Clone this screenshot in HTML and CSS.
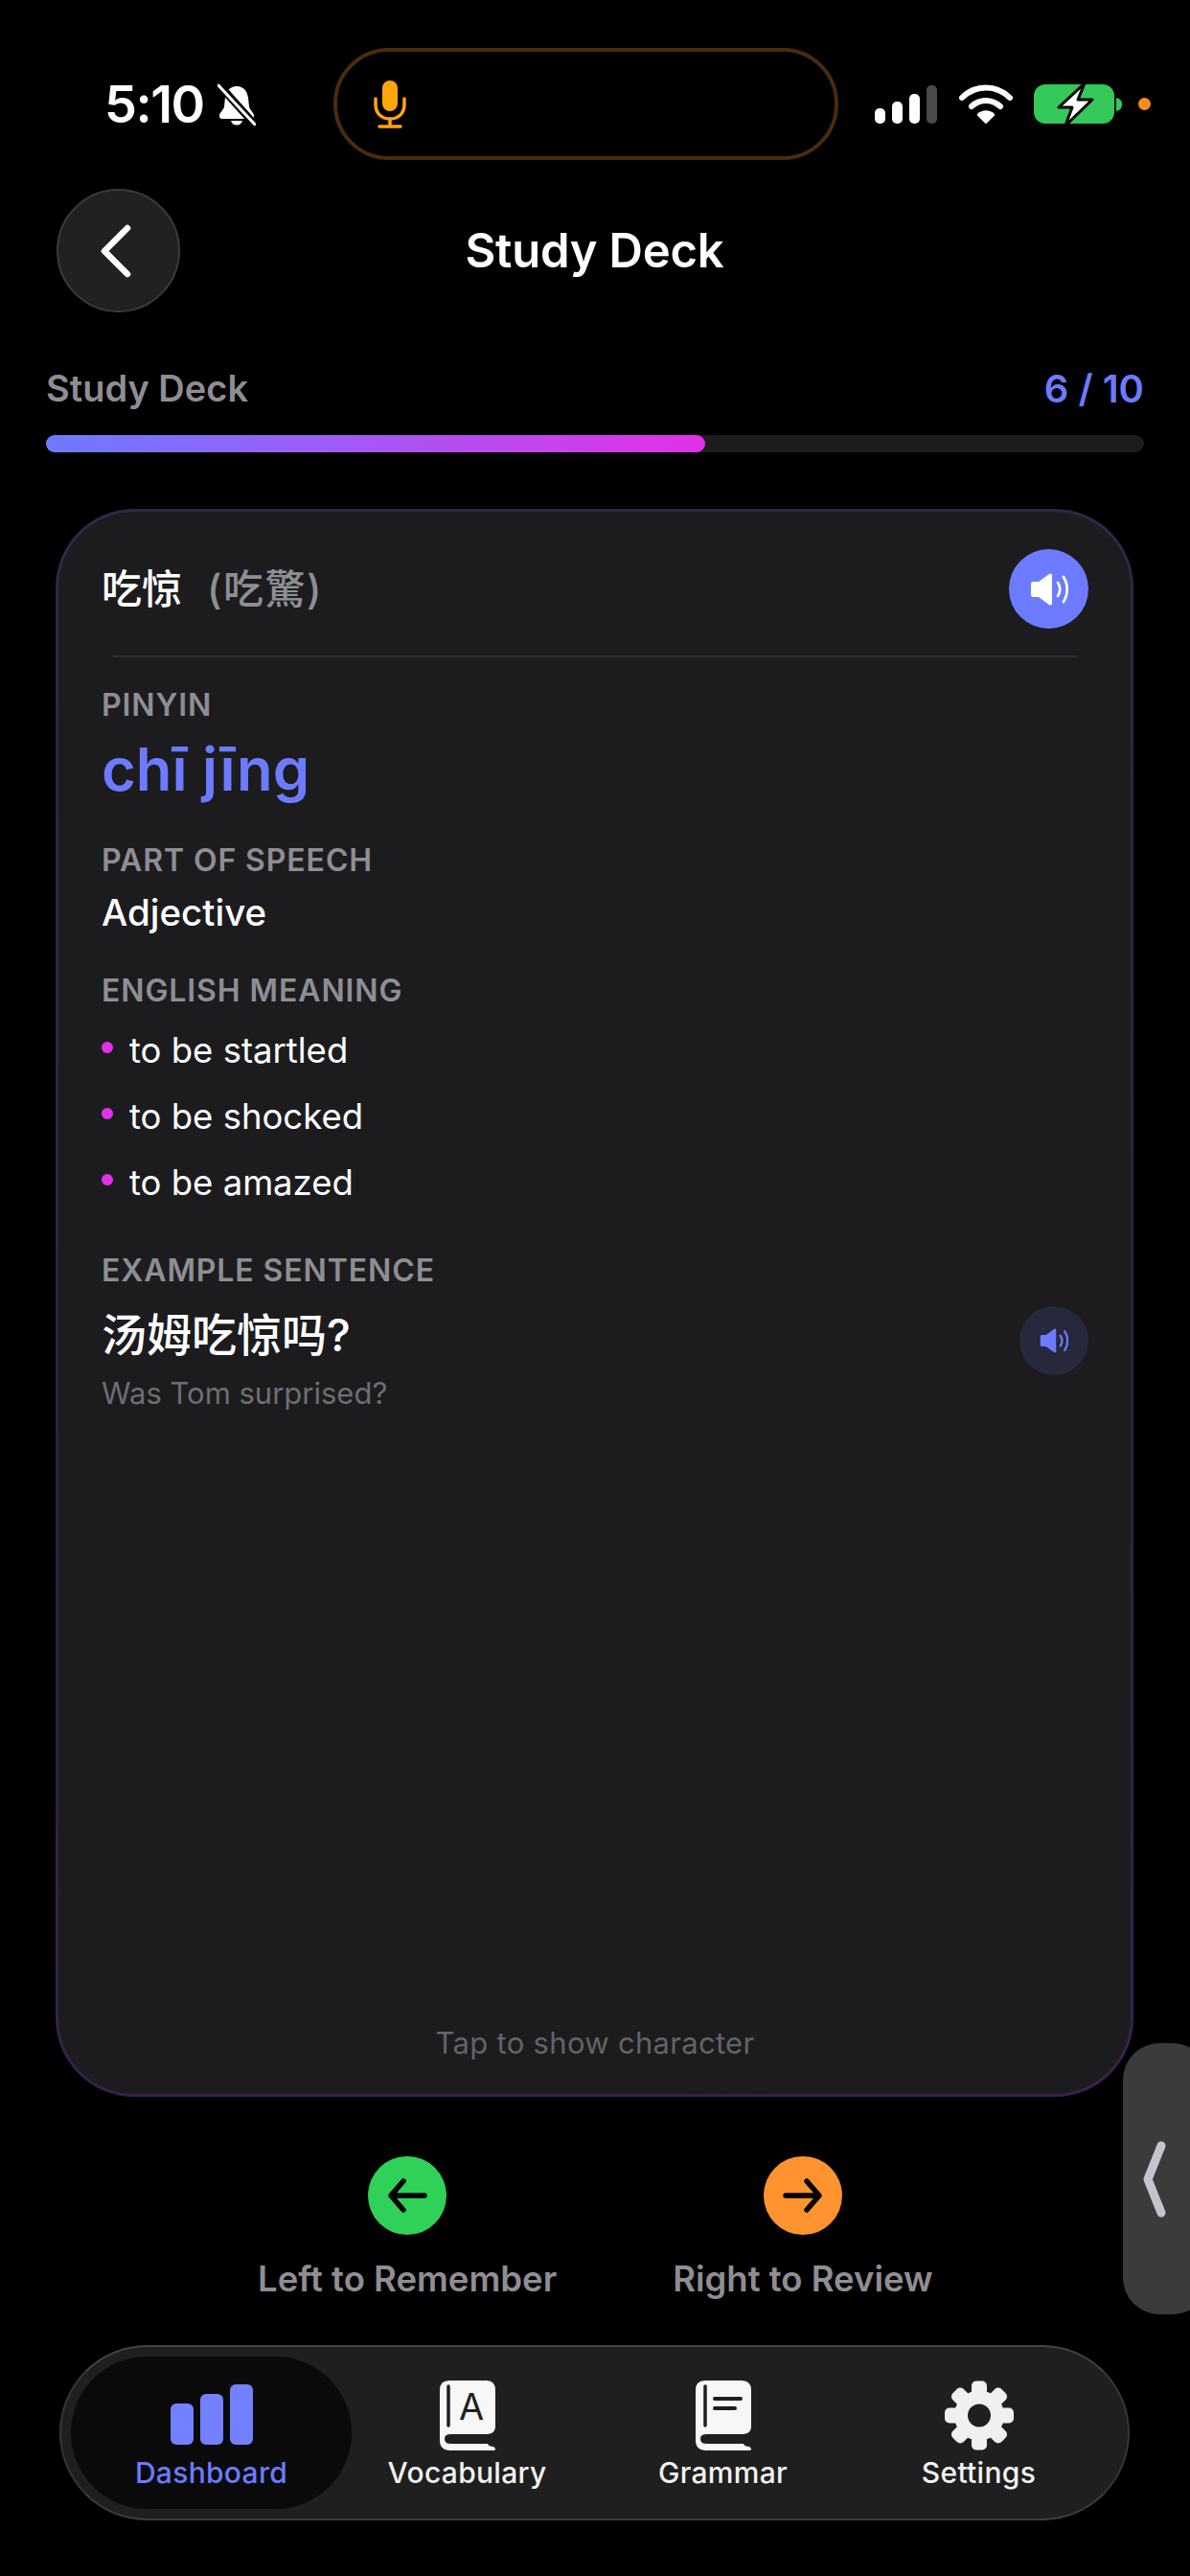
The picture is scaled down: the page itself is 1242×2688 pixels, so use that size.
FILE: index.html
```html
<!DOCTYPE html>
<html lang="en">
<head>
    <meta charset="UTF-8">
    <meta name="viewport" content="width=device-width, initial-scale=1.0">
    <title>Study Deck</title>
    <link rel="stylesheet" href="styles.css">
</head>
<body>
    <div class="page">
        <!-- status bar -->
        <div class="statusbar">
            <div class="status-left">
                <span class="clock">5:10</span>
                <svg class="bell" viewBox="0 0 40 44" width="40" height="44">
                    <path d="M20 3c7 0 11 5 12 12l1 9c.5 4 5 6 5 10 0 2-1 3-3 3H5c-2 0-3-1-3-3 0-4 4.500-6 5-10l1-9C9 8 13 3 20 3z" fill="#fff"/>
                    <path d="M14 39h12c-1 3-3 4.500-6 4.500s-5-1.500-6-4.500z" fill="#fff"/>
                    <path d="M3 3l35 39" stroke="#000" stroke-width="8"/>
                    <path d="M1 2l38 41" stroke="#fff" stroke-width="3" stroke-linecap="round"/>
                </svg>
            </div>
            <div class="island">
                <svg class="mic" viewBox="0 0 34 50" width="34" height="50">
                    <rect x="9" y="0" width="16" height="32" rx="8" fill="#ffa50a"/>
                    <path d="M2 19v6c0 9 6 15 15 15s15-6 15-15v-6" fill="none" stroke="#ffa50a" stroke-width="3.500" stroke-linecap="round"/>
                    <path d="M17 40v8M6 48h22" fill="none" stroke="#ffa50a" stroke-width="3.500" stroke-linecap="round"/>
                </svg>
            </div>
            <div class="status-right">
                <svg viewBox="0 0 65 40" width="65" height="40">
                    <rect x="0" y="24" width="11" height="16" rx="5" fill="#fff"/>
                    <rect x="18" y="17" width="11" height="23" rx="5" fill="#fff"/>
                    <rect x="36" y="9" width="11" height="31" rx="5" fill="#fff"/>
                    <rect x="54" y="0" width="11" height="40" rx="5" fill="#4a4a4a"/>
                </svg>
                <svg class="wifi" viewBox="0 0 56 41" width="56" height="41">
                    <path d="M3 14C17 0 39 0 53 14" fill="none" stroke="#fff" stroke-width="6" stroke-linecap="round"/>
                    <path d="M13 23c9-8 21-8 30 0" fill="none" stroke="#fff" stroke-width="6" stroke-linecap="round"/>
                    <path d="M19 31c5-5 13-5 18 0 .5.500.5 1 0 1.500L29 40.500c-.5.500-1.500.500-2 0l-8-8c-.5-.5-.5-1 0-1.500z" fill="#fff"/>
                </svg>
                <svg class="battery" viewBox="0 0 92 44" width="92" height="44">
                    <rect x="0" y="1" width="84" height="41" rx="12" fill="#34c759"/>
                    <path d="M86 15c4 1 6 3 6 7s-2 6-6 7z" fill="#34c759"/>
                    <path d="M53 0L26 25h14l-7 19 28-27H46z" fill="#fff" stroke="#000" stroke-width="3" stroke-linejoin="round"/>
                </svg>
                <span class="rec-dot"></span>
            </div>
        </div>

        <!-- header -->
        <header class="topbar">
            <button class="back-btn">
                <svg viewBox="0 0 36 56" width="36" height="56">
                    <path d="M31 4L7 28l24 24" fill="none" stroke="#fff" stroke-width="6.500" stroke-linecap="round" stroke-linejoin="round"/>
                </svg>
            </button>
            <h1>Study Deck</h1>
        </header>

        <!-- progress -->
        <section class="progress">
            <div class="progress-row">
                <span class="progress-name">Study Deck</span>
                <span class="progress-count">6 / 10</span>
            </div>
            <div class="progress-track">
                <div class="progress-fill" style="width: 60%"></div>
            </div>
        </section>

        <!-- flash card -->
        <main class="card">
            <div class="card-head">
                <div class="word">吃惊<span class="word-alt">(吃驚)</span></div>
                <button class="sound-btn">
                    <svg viewBox="0 0 40 34" width="40" height="34">
                        <path d="M1 11c0-1 1-2 2-2h6L20 1c1-1 3-.5 3 1v30c0 1.500-2 2-3 1L9 25H3c-1 0-2-1-2-2z" fill="#fff"/>
                        <path d="M29 10c3 4 3 10 0 14" fill="none" stroke="#fff" stroke-width="2.800" stroke-linecap="round"/>
                        <path d="M35 4c5 8 5 18 0 26" fill="none" stroke="#fff" stroke-width="2.800" stroke-linecap="round"/>
                    </svg>
                </button>
            </div>
            <div class="card-rule"></div>

            <div class="label label-pinyin">PINYIN</div>
            <div class="pinyin">chī jīng</div>

            <div class="label label-pos">PART OF SPEECH</div>
            <div class="pos">Adjective</div>

            <div class="label label-meaning">ENGLISH MEANING</div>
            <ul class="meanings">
                <li>to be startled</li>
                <li>to be shocked</li>
                <li>to be amazed</li>
            </ul>

            <div class="label label-example">EXAMPLE SENTENCE</div>
            <div class="example">
                <div>
                    <div class="example-zh">汤姆吃惊吗?</div>
                    <div class="example-en">Was Tom surprised?</div>
                </div>
                <button class="sound-btn small">
                    <svg viewBox="0 0 40 34" width="30" height="26">
                        <path d="M1 11c0-1 1-2 2-2h6L20 1c1-1 3-.5 3 1v30c0 1.500-2 2-3 1L9 25H3c-1 0-2-1-2-2z" fill="#6c7bff"/>
                        <path d="M29 10c3 4 3 10 0 14" fill="none" stroke="#6c7bff" stroke-width="3" stroke-linecap="round"/>
                        <path d="M35 4c5 8 5 18 0 26" fill="none" stroke="#6c7bff" stroke-width="3" stroke-linecap="round"/>
                    </svg>
                </button>
            </div>

            <div class="tap-hint">Tap to show character</div>
        </main>

        <!-- swipe hints -->
        <section class="swipes">
            <div class="swipe">
                <span class="swipe-circle green">
                    <svg viewBox="0 0 44 36" width="44" height="36">
                        <path d="M40 18H7M18 3L5 18l13 15" fill="none" stroke="#000" stroke-width="5.500" stroke-linecap="round" stroke-linejoin="round"/>
                    </svg>
                </span>
                <span class="swipe-label">Left to Remember</span>
            </div>
            <div class="swipe">
                <span class="swipe-circle orange">
                    <svg viewBox="0 0 44 36" width="44" height="36">
                        <path d="M4 18h33M26 3l13 15-13 15" fill="none" stroke="#000" stroke-width="5.500" stroke-linecap="round" stroke-linejoin="round"/>
                    </svg>
                </span>
                <span class="swipe-label">Right to Review</span>
            </div>
        </section>

        <!-- bottom tabs -->
        <nav class="tabbar">
            <div class="tab active">
                <span class="bars">
                    <i class="bar-a"></i><i class="bar-b"></i><i class="bar-c"></i>
                </span>
                <span class="tab-name">Dashboard</span>
            </div>
            <div class="tab">
                <svg viewBox="0 0 58 73" width="58" height="73">
                    <path d="M10 0H48Q58 0 58 10V48Q58 53 54 55L50 56H11Q5 56 5 61T11 66H50Q51 69 56 69Q58 70 58 71.500T56 73H11Q0 73 0 62V10Q0 0 10 0Z" fill="#f7f7f7"/>
                    <path d="M9 6V47" stroke="#1f1f1f" stroke-width="3.500" stroke-linecap="round"/>
                    <text class="book-letter" x="33" y="41" text-anchor="middle">A</text>
                </svg>
                <span class="tab-name">Vocabulary</span>
            </div>
            <div class="tab">
                <svg viewBox="0 0 58 73" width="58" height="73">
                    <path d="M10 0H48Q58 0 58 10V48Q58 53 54 55L50 56H11Q5 56 5 61T11 66H50Q51 69 56 69Q58 70 58 71.500T56 73H11Q0 73 0 62V10Q0 0 10 0Z" fill="#f7f7f7"/>
                    <path d="M10 6V47" stroke="#1f1f1f" stroke-width="3.500" stroke-linecap="round"/>
                    <path d="M20 19H47M20 29H41" stroke="#1f1f1f" stroke-width="4" stroke-linecap="round"/>
                </svg>
                <span class="tab-name">Grammar</span>
            </div>
            <div class="tab">
                <svg viewBox="-36 -36 72 72" width="72" height="72">
                    <g fill="#f0f0f0">
                        <circle r="26"/>
                        <rect x="-8" y="-36" width="16" height="20" rx="5"/>
                        <rect x="-8" y="-36" width="16" height="20" rx="5" transform="rotate(45)"/>
                        <rect x="-8" y="-36" width="16" height="20" rx="5" transform="rotate(90)"/>
                        <rect x="-8" y="-36" width="16" height="20" rx="5" transform="rotate(135)"/>
                        <rect x="-8" y="-36" width="16" height="20" rx="5" transform="rotate(180)"/>
                        <rect x="-8" y="-36" width="16" height="20" rx="5" transform="rotate(225)"/>
                        <rect x="-8" y="-36" width="16" height="20" rx="5" transform="rotate(270)"/>
                        <rect x="-8" y="-36" width="16" height="20" rx="5" transform="rotate(315)"/>
                    </g>
                    <circle r="12" fill="#1f1f1f"/>
                </svg>
                <span class="tab-name">Settings</span>
            </div>
        </nav>

        <!-- edge drawer handle -->
        <div class="edge-handle">
            <svg viewBox="0 0 26 80" width="26" height="80">
                <path d="M20 5L6 40l14 35" fill="none" stroke="#c4c5cc" stroke-width="9" stroke-linecap="round" stroke-linejoin="round"/>
            </svg>
        </div>
    </div>
</body>
</html>
```

FILE: styles.css
```css
/* base */
* {
    box-sizing: border-box;
}

html, body {
    margin: 0;
    padding: 0;
    background-color: #000000;
}

body {
    font-family: Inter, "Noto Sans CJK SC", sans-serif;
    color: #ffffff;
}

.page {
    position: relative;
    width: 1242px;
    height: 2688px;
    overflow: hidden;
}

button {
    padding: 0;
    border: 0;
    cursor: pointer;
}

/* status bar */
.statusbar {
    display: flex;
    align-items: flex-start;
    height: 167px;
    padding-top: 50px;
}

.status-left {
    display: flex;
    align-items: center;
    gap: 14px;
    width: 348px;
    height: 117px;
    padding-left: 109px;
}

.clock {
    font-size: 54px;
    font-weight: 600;
    letter-spacing: -1.5px;
}

.island {
    display: flex;
    align-items: center;
    width: 527px;
    height: 117px;
    padding-left: 38px;
    border: 4px solid #4a2b0c;
    border-radius: 58px;
}

.status-right {
    display: flex;
    align-items: center;
    height: 117px;
    padding-left: 38px;
}

.wifi {
    margin-left: 23px;
}

.battery {
    margin-left: 22px;
}

.rec-dot {
    width: 13px;
    height: 13px;
    margin-left: 17px;
    border-radius: 50%;
    background-color: #ff8a1e;
}

/* header */
.topbar {
    display: grid;
    grid-template-columns: 1fr auto 1fr;
    align-items: center;
    height: 129px;
    margin-top: 30px;
    padding: 0 60px 0 59px;
}

.back-btn {
    display: flex;
    align-items: center;
    justify-content: center;
    width: 129px;
    height: 129px;
    padding-right: 8px;
    border: 2px solid #3b3b3b;
    border-radius: 50%;
    background-color: #212121;
}

.topbar h1 {
    margin: 0;
    font-size: 49px;
    font-weight: 600;
    letter-spacing: -0.2px;
}

/* progress */
.progress {
    margin-top: 55px;
    padding: 0 48px;
}

.progress-row {
    display: flex;
    justify-content: space-between;
    align-items: center;
    height: 48px;
    font-size: 38px;
    font-weight: 600;
}

.progress-name {
    color: #8e8e93;
}

.progress-count {
    font-size: 40px;
    color: #6c7bff;
}

.progress-track {
    height: 18px;
    margin-top: 25px;
    border-radius: 9px;
    background-color: #1c1c1e;
}

.progress-fill {
    height: 100%;
    border-radius: 9px;
    background: linear-gradient(90deg, #6c7bff, #e132e8);
}

/* card */
.card {
    display: flex;
    flex-direction: column;
    width: 1125px;
    height: 1657px;
    margin: 59px 0 0 58px;
    padding: 39px 44px 0 45px;
    border: 3px solid transparent;
    border-radius: 82px;
    background:
        linear-gradient(#1c1c1e, #1c1c1e) padding-box,
        linear-gradient(170deg, #2b2a48, #2a2440 60%, #3a2050) border-box;
}

.card-head {
    display: flex;
    align-items: center;
    justify-content: space-between;
    height: 83px;
}

.word {
    font-size: 42px;
    font-weight: 500;
    line-height: 60px;
}

.word-alt {
    margin-left: 26px;
    color: #8e8e93;
    font-weight: 500;
    letter-spacing: 1.5px;
}

.sound-btn {
    display: flex;
    align-items: center;
    justify-content: center;
    width: 83px;
    height: 83px;
    border-radius: 50%;
    background-color: #6c7bff;
}

.sound-btn.small {
    width: 72px;
    height: 72px;
    background-color: #28283c;
}

.card-rule {
    height: 2px;
    margin: 28px 11px 0 12px;
    background-color: #2e2e30;
}

.label {
    height: 40px;
    line-height: 40px;
    font-size: 32px;
    font-weight: 600;
    letter-spacing: 0.9px;
    color: #8e8e93;
}

.label-pinyin {
    margin-top: 30px;
}

.pinyin {
    height: 84px;
    margin-top: 5px;
    line-height: 84px;
    font-size: 61.5px;
    font-weight: 600;
    color: #6c7bff;
}

.label-pos {
    margin-top: 33px;
}

.pos {
    height: 56px;
    margin-top: 6px;
    line-height: 56px;
    font-size: 38.5px;
    font-weight: 500;
}

.label-meaning {
    margin-top: 34px;
}

.meanings {
    margin: 17px 0 0;
    padding: 0;
    list-style: none;
}

.meanings li {
    position: relative;
    height: 69px;
    padding-left: 29px;
    line-height: 50px;
    font-size: 36.5px;
    font-weight: 400;
}

/* bullet dot */
.meanings li::before {
    content: "";
    position: absolute;
    left: 0;
    top: 16px;
    width: 12px;
    height: 12px;
    border-radius: 50%;
    background-color: #e132e8;
}

.label-example {
    margin-top: 28px;
}

.example {
    display: flex;
    align-items: flex-start;
    justify-content: space-between;
    margin-top: 12px;
}

.example .small {
    margin-top: 5px;
}

.example-zh {
    height: 70px;
    line-height: 70px;
    font-size: 47px;
    font-weight: 500;
}

.example-en {
    height: 44px;
    margin-top: 4px;
    line-height: 44px;
    font-size: 31px;
    color: #6e6e73;
}

.tap-hint {
    margin-top: auto;
    padding-bottom: 33px;
    line-height: 40px;
    text-align: center;
    font-size: 31px;
    letter-spacing: 0.3px;
    color: #636368;
}

/* swipe hints */
.swipes {
    display: flex;
    height: 152px;
    margin-top: 62px;
    padding-left: 269px;
    gap: 121px;
}

.swipe {
    display: flex;
    flex-direction: column;
    align-items: center;
}

.swipe-circle {
    display: flex;
    align-items: center;
    justify-content: center;
    width: 82px;
    height: 82px;
    border-radius: 50%;
}

.green {
    background-color: #30d158;
}

.orange {
    background-color: #ff9330;
}

.swipe-label {
    margin-top: 24px;
    line-height: 44px;
    font-size: 36.5px;
    font-weight: 600;
    color: #8e8e93;
}

/* tab bar */
.tabbar {
    display: flex;
    width: 1117px;
    height: 183px;
    margin: 45px 0 0 62px;
    padding: 10px;
    border: 2px solid #363636;
    border-top-color: #444444;
    border-bottom-color: #3e3e3e;
    border-radius: 92px;
    background-color: #1f1f1f;
}

.tab {
    display: flex;
    flex-direction: column;
    align-items: center;
    flex: 0 0 267px;
    padding-top: 25px;
}

.tab svg {
    height: 73px;
}

.tab.active {
    flex-basis: 293px;
    margin-right: -13px;
    border-radius: 80px;
    background-color: #0a0a0a;
}

.tab-name {
    margin-top: 3px;
    line-height: 40px;
    font-size: 30px;
    font-weight: 500;
    letter-spacing: 0.3px;
    color: #f2f2f2;
}

.active .tab-name {
    color: #6c7bff;
}

.book-letter {
    font-family: Inter, sans-serif;
    font-size: 38px;
    font-weight: 400;
    fill: #1f1f1f;
}

.bars {
    display: flex;
    align-items: flex-end;
    gap: 7px;
    height: 73px;
    padding-bottom: 6px;
}

.bars i {
    display: block;
    width: 24px;
    border-radius: 6px;
    background-color: #7380ff;
}

.bar-a { height: 43px; }
.bar-b { height: 53px; }
.bar-c { height: 63px; }

/* edge handle sits over the page */
.edge-handle {
    position: absolute;
    left: 1172px;
    top: 2132px;
    display: flex;
    align-items: center;
    width: 90px;
    height: 283px;
    padding-left: 20px;
    border-radius: 38px;
    background-color: #3a3b3d;
}
```
